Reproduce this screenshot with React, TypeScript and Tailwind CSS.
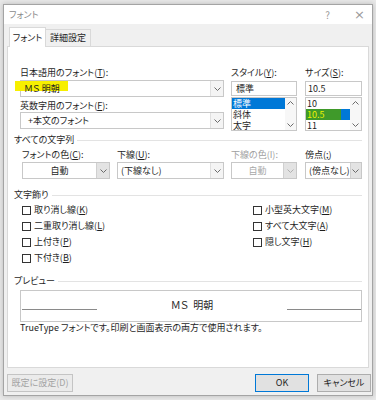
import React from "react";

const FONT = "font-['Noto_Sans_CJK_JP','Noto_Sans',sans-serif] [font-feature-settings:'palt']";

function Chev({ up = false, color = "#6b6b6b" }: { up?: boolean; color?: string }) {
  return (
    <svg width="7" height="4" viewBox="0 0 7 4">
      <path
        d={up ? "M0.5 3.5L3.5 0.5L6.5 3.5" : "M0.5 0.5L3.5 3.5L6.5 0.5"}
        fill="none"
        stroke={color}
        strokeWidth="1"
      />
    </svg>
  );
}

function Label({ children, disabled = false }: { children: React.ReactNode; disabled?: boolean }) {
  return (
    <div className={"h-[12px] leading-[12px] text-[9px] whitespace-nowrap " + (disabled ? "text-[#a0a0a0]" : "text-[#1e1e1e]")}>
      {children}
    </div>
  );
}

function Combo({
  w,
  children,
  center = false,
  disabled = false,
  grayBtn = false,
}: {
  w: string;
  children?: React.ReactNode;
  center?: boolean;
  disabled?: boolean;
  grayBtn?: boolean;
}) {
  return (
    <div className={w + " h-[17px] flex border border-[#c8c8c8] bg-white relative"}>
      <div
        className={
          "flex-1 flex items-center text-[9px] leading-[12px] whitespace-nowrap " +
          (center ? "justify-center " : "pl-[3px] ") +
          (disabled ? "text-[#a8a8a8]" : "text-[#1e1e1e]")
        }
      >
        {children}
      </div>
      <div
        className={
          "w-[13px] flex items-center justify-center border-l " +
          (grayBtn ? "bg-[#e3e3e3] border-[#d0d0d0]" : "bg-[#f4f4f4] border-[#e0e0e0]")
        }
      >
        <Chev color={disabled ? "#b0b0b0" : "#6b6b6b"} />
      </div>
    </div>
  );
}

function ListBox({
  w,
  items,
}: {
  w: string;
  items: { t: string; sel?: boolean; hl?: boolean }[];
}) {
  return (
    <div className={w + " h-[34px] flex border border-[#c8c8c8] bg-white"}>
      <div className="flex-1 flex flex-col">
        {items.map((it, i) => (
          <div
            key={i}
            className={
              "h-[11px] leading-[11px] text-[9px] " +
              (it.sel ? "bg-[#0078d7] text-white" : "text-[#1e1e1e]")
            }
          >
            {it.hl ? (
              <span className="inline-block h-[11px] w-[35px] bg-[#3f9a2a] text-[#eef200] pl-[1px]">{it.t}</span>
            ) : (
              <span className="pl-[1px]">{it.t}</span>
            )}
          </div>
        ))}
      </div>
      <div className="w-[11px] flex flex-col justify-between items-center py-[3px] bg-[#f7f7f7]">
        <Chev up />
        <Chev />
      </div>
    </div>
  );
}

function GroupHead({ children }: { children: React.ReactNode }) {
  return (
    <div className="flex items-center h-[12px] pl-[6px] pr-[6px]">
      <span className="text-[9px] leading-[12px] text-[#1e1e1e] whitespace-nowrap">{children}</span>
      <div className="flex-1 h-px bg-[#e3e3e3] ml-[3px]" />
    </div>
  );
}

function Check({ children }: { children: React.ReactNode }) {
  return (
    <div className="h-[16px] flex items-center">
      <div className="w-[9px] h-[9px] border border-[#333] bg-white" />
      <span className="ml-[3px] text-[9px] leading-[12px] text-[#1e1e1e] whitespace-nowrap">{children}</span>
    </div>
  );
}

export default function App() {
  return (
    <div className={"w-[376px] h-[400px] bg-[#e8e8e8] pt-[4px] pl-[3px] overflow-hidden " + FONT}>
      <div className="w-[370px] h-[392px] border border-[#a4a4a4] bg-[#f0f0f0] flex flex-col shadow-[0_0_5px_rgba(0,0,0,0.2)]">
        {/* Title bar */}
        <div className="h-[19px] bg-white flex items-center pl-[5px] pr-[7px]">
          <span className="text-[9px] text-[#8a8a8a]">フォント</span>
          <div className="flex-1" />
          <span className="text-[10px] text-[#9a9a9a] mr-[24px]">?</span>
          <span className="text-[13px] leading-[13px] text-[#9a9a9a] font-['DejaVu_Sans',sans-serif]">×</span>
        </div>
        {/* Tabs */}
        <div className="h-[22px] flex items-end pl-[5px]">
          <div className="relative z-10 -mb-px h-[20px] w-[37px] bg-white border-l border-t border-r border-[#d9d9d9] flex items-center justify-center text-[9px] text-[#1e1e1e]">
            フォント
          </div>
          <div className="h-[17px] w-[45px] border-t border-r border-[#d9d9d9] flex items-center justify-center text-[9px] text-[#1e1e1e]">
            詳細設定
          </div>
        </div>
        {/* Panel */}
        <div className="ml-[3px] w-[362px] h-[322px] bg-white border border-[#d9d9d9] flex flex-col pt-[20px]">
          {/* top row */}
          <div className="flex pl-[12px]">
            <div className="w-[204px] flex flex-col">
              <Label>
                日本語用のフォント(<u>T</u>):
              </Label>
              <div className="mt-[1px]">
                <Combo w="w-[204px]">
                  <span className="relative">
                    <span className="absolute left-[-9px] top-[-2px] w-[53px] h-[10px] bg-[#f7ef00]" />
                    <span className="relative">ＭＳ 明朝</span>
                  </span>
                </Combo>
              </div>
              <div className="mt-[3px]">
                <Label>
                  英数字用のフォント(<u>F</u>):
                </Label>
              </div>
              <div className="mt-[0px]">
                <Combo w="w-[204px]">
                  <span className="pl-[4px]">+本文のフォント</span>
                </Combo>
              </div>
            </div>
            <div className="w-[66px] ml-[7px] flex flex-col">
              <Label>
                スタイル(<u>Y</u>):
              </Label>
              <div className="mt-[2px] h-[15px] border border-[#c8c8c8] flex items-center pl-[4px] text-[9px] text-[#1e1e1e]">
                標準
              </div>
              <div className="mt-[1px]">
                <ListBox
                  w="w-[66px]"
                  items={[{ t: "標準", sel: true }, { t: "斜体" }, { t: "太字" }]}
                />
              </div>
            </div>
            <div className="w-[57px] ml-[8px] flex flex-col">
              <Label>
                サイズ(<u>S</u>):
              </Label>
              <div className="mt-[2px] h-[15px] border border-[#c8c8c8] flex items-center pl-[2px] text-[9px] text-[#1e1e1e]">
                10.5
              </div>
              <div className="mt-[1px]">
                <ListBox
                  w="w-[57px]"
                  items={[{ t: "10" }, { t: "10.5", sel: true, hl: true }, { t: "11" }]}
                />
              </div>
            </div>
          </div>
          {/* すべての文字列 */}
          <div className="mt-[3px]">
            <GroupHead>すべての文字列</GroupHead>
          </div>
          <div className="flex pl-[14px] mt-[3px]">
            <div className="w-[88px] flex flex-col">
              <Label>
                フォントの色(<u>C</u>):
              </Label>
              <div className="mt-[1px]">
                <Combo w="w-[88px]" center grayBtn>
                  自動
                </Combo>
              </div>
            </div>
            <div className="w-[107px] ml-[7px] flex flex-col">
              <Label>
                下線(<u>U</u>):
              </Label>
              <div className="mt-[1px]">
                <Combo w="w-[107px]">(下線なし)</Combo>
              </div>
            </div>
            <div className="w-[66px] ml-[7px] flex flex-col">
              <Label disabled>下線の色(I):</Label>
              <div className="mt-[1px]">
                <Combo w="w-[66px]" center disabled grayBtn>
                  自動
                </Combo>
              </div>
            </div>
            <div className="w-[57px] ml-[8px] flex flex-col">
              <Label>
                傍点(<u>;</u>)
              </Label>
              <div className="mt-[1px]">
                <Combo w="w-[57px]" grayBtn>
                  (傍点なし)
                </Combo>
              </div>
            </div>
          </div>
          {/* 文字飾り */}
          <div className="mt-[10px]">
            <GroupHead>文字飾り</GroupHead>
          </div>
          <div className="flex pl-[14px] mt-[1px]">
            <div className="w-[231px] flex flex-col">
              <Check>
                取り消し線(<u>K</u>)
              </Check>
              <Check>
                二重取り消し線(<u>L</u>)
              </Check>
              <Check>
                上付き(<u>P</u>)
              </Check>
              <Check>
                下付き(<u>B</u>)
              </Check>
            </div>
            <div className="flex flex-col">
              <Check>
                小型英大文字(<u>M</u>)
              </Check>
              <Check>
                すべて大文字(<u>A</u>)
              </Check>
              <Check>
                隠し文字(<u>H</u>)
              </Check>
            </div>
          </div>
          {/* プレビュー */}
          <div className="mt-[9px]">
            <GroupHead>プレビュー</GroupHead>
          </div>
          <div className="ml-[12px] mt-[3px] w-[342px] h-[32px] border border-[#c8c8c8] flex items-start pt-[8px] pl-[1px]">
            <div className="w-[75px] h-px bg-[#8a8a8a] mt-[10px]" />
            <div className="flex-1 text-center text-[10px] leading-[14px] text-[#1e1e1e] font-['Liberation_Serif','Noto_Sans_CJK_JP',serif]">
              ＭＳ&nbsp;&nbsp;明朝
            </div>
            <div className="w-[74px] h-px bg-[#8a8a8a] mt-[10px]" />
          </div>
          <div className="ml-[12px] mt-[0px] text-[9px] leading-[12px] text-[#1e1e1e] whitespace-nowrap">
            TrueType フォントです。印刷と画面表示の両方で使用されます。
          </div>
        </div>
        {/* Buttons */}
        <div className="flex items-start pt-[6px] pl-[3px]">
          <div className="w-[66px] h-[18px] border border-[#c4c4c4] bg-[#ebebeb] flex items-center justify-center text-[9px] text-[#a3a3a3]">
            既定に設定(D)
          </div>
          <div className="flex-1" />
          <div className="w-[54px] h-[18px] border border-[#0078d7] bg-[#e1e1e1] flex items-center justify-center text-[9px] text-[#1e1e1e]">
            OK
          </div>
          <div className="w-[54px] h-[18px] ml-[8px] mr-[1px] border border-[#adadad] bg-[#e1e1e1] flex items-center justify-center text-[9px] text-[#1e1e1e]">
            キャンセル
          </div>
        </div>
      </div>
    </div>
  );
}
